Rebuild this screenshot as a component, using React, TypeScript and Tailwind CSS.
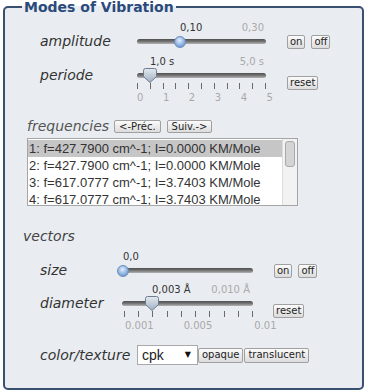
import React from 'react';

type SliderProps = {
  width: number;
  pos: number;
  value: string;
  max?: string;
  maxRight?: number;
  thumb: 'round' | 'pointer';
  ticks?: number;
  tickOffset?: number;
  tickLabels?: React.ReactNode;
};

const RoundThumb = ({ left }: { left: number }) => (
  <div
    className="absolute top-[1px] w-[12px] h-[12px] -ml-[6px] rounded-full border border-[#6a8cbb] bg-[radial-gradient(circle_at_45%_35%,#e3eefb,#8db2e2_55%,#5a84c0)]"
    style={{ left }}
  />
);

const PointerThumb = ({ left }: { left: number }) => (
  <svg className="absolute -top-[1px] -ml-[7px]" width="14" height="15" viewBox="0 0 14 15" style={{ left }}>
    <defs>
      <linearGradient id="pt" x1="0" y1="0" x2="0" y2="1">
        <stop offset="0" stopColor="#e4e9ef" />
        <stop offset="1" stopColor="#9fb0c3" />
      </linearGradient>
    </defs>
    <path d="M2.5 0.5 H11.5 Q13.5 0.5 13.5 2.5 V8.5 L7 14.5 L0.5 8.5 V2.5 Q0.5 0.5 2.5 0.5 Z" fill="url(#pt)" stroke="#6c7b8e" />
  </svg>
);

const Slider = ({ width, pos, value, max, maxRight = 2, thumb, ticks, tickOffset = 0, tickLabels }: SliderProps) => (
  <div className="relative shrink-0" style={{ width }}>
    <div className="relative h-[15px] text-[10px] leading-[12px]">
      <span className="absolute top-[2px] text-[#333]" style={{ left: pos }}>{value}</span>
      {max && (
        <span className="absolute top-[2px] text-[#a9a9a9]" style={{ right: maxRight }}>{max}</span>
      )}
    </div>
    <div className="relative h-[13px] flex items-center">
      <div className="w-full h-[5px] rounded-full bg-gradient-to-b from-[#4e4e4e] via-[#767676] to-[#b4b4b4]" />
      {thumb === 'round' ? <RoundThumb left={pos} /> : <PointerThumb left={pos} />}
    </div>
    {ticks && (
      <div className="flex justify-between h-[6px] mt-[1px]" style={{ marginLeft: tickOffset }}>
        {Array.from({ length: ticks }).map((_, i) => (
          <div key={i} className="w-px h-full bg-[#6a6a6a]" />
        ))}
      </div>
    )}
    {tickLabels}
  </div>
);

const Btn = ({ children, className = '' }: { children: React.ReactNode; className?: string }) => (
  <button
    className={`h-[14px] px-[2px] border border-[#a0a0a0] rounded-[2px] bg-gradient-to-b from-[#fbfbfb] to-[#dcdcdc] text-[10px] leading-[12px] text-[#222] ${className}`}
  >
    {children}
  </button>
);

const modes = [
  '1: f=427.7900 cm^-1; I=0.0000 KM/Mole',
  '2: f=427.7900 cm^-1; I=0.0000 KM/Mole',
  '3: f=617.0777 cm^-1; I=3.7403 KM/Mole',
  '4: f=617.0777 cm^-1; I=3.7403 KM/Mole',
];

export default function App() {
  return (
    <div className="w-[367px] h-[392px] bg-white font-['DejaVu_Sans',sans-serif] text-[#333]">
      <fieldset className="ml-[3px] w-[361px] h-[390px] border-2 border-[#3a5071] rounded-[5px] bg-[#e9edf1]">
        <legend className="ml-[17px] px-[2px] text-[14px] leading-[14px] font-bold text-[#2b4a7c]">
          Modes of Vibration
        </legend>

        {/* amplitude */}
        <div className="flex mt-[6px]">
          <div className="w-[132px] pl-[35px] mt-[15px] h-[13px] flex items-center italic text-[14px]">amplitude</div>
          <Slider width={129} pos={43} value="0,10" max="0,30" thumb="round" />
          <div className="flex gap-[6px] ml-[21px] mt-[15px]">
            <Btn>on</Btn>
            <Btn>off</Btn>
          </div>
        </div>

        {/* periode */}
        <div className="flex mt-[5px]">
          <div className="w-[132px] pl-[35px] mt-[15px] h-[13px] flex items-center italic text-[14px]">periode</div>
          <Slider
            width={129}
            pos={13}
            value="1,0 s"
            max="5,0 s"
            thumb="pointer"
            ticks={11}
            tickLabels={
              <div className="flex justify-between w-[136px] mt-[3px] text-[10px] leading-[12px] text-[#a9a9a9]">
                <span>0</span>
                <span>1</span>
                <span>2</span>
                <span>3</span>
                <span>4</span>
                <span>5</span>
              </div>
            }
          />
          <div className="ml-[21px] mt-[15px]">
            <Btn>reset</Btn>
          </div>
        </div>

        {/* frequencies */}
        <div className="flex items-center h-[15px] mt-[15px] pl-[22px]">
          <span className="italic text-[14px] text-[#555] leading-[15px]">frequencies</span>
          <Btn className="ml-[5px] !h-[13px] px-[4px] text-[9px] leading-[11px]">&lt;-Préc.</Btn>
          <Btn className="ml-[6px] !h-[13px] px-[4px] text-[9px] leading-[11px]">Suiv.-&gt;</Btn>
        </div>

        <div className="ml-[22px] mt-[4px] w-[271px] h-[68px] border border-[#a5a5a5] bg-white flex overflow-hidden">
          <div className="flex-1 pt-px font-['Liberation_Sans',Arial,sans-serif] text-[13px] leading-[17px] text-[#333]">
            {modes.map((m, i) => (
              <div key={i} className={`pl-[1px] whitespace-nowrap ${i === 0 ? 'bg-[#c6c6c6]' : ''}`}>
                {m}
              </div>
            ))}
          </div>
          <div className="w-[15px] border-l border-[#dcdcdc] bg-[#f2f2f2] pt-[2px] pl-[2px]">
            <div className="w-[10px] h-[26px] rounded-[3px] border border-[#a9a9a9] bg-[#d4d4d4]" />
          </div>
        </div>

        {/* vectors */}
        <div className="mt-[22px] pl-[18px] h-[17px] italic text-[14px] leading-[17px] text-[#444]">vectors</div>

        {/* size */}
        <div className="flex mt-[4px]">
          <div className="w-[117px] pl-[35px] mt-[15px] h-[13px] flex items-center italic text-[14px]">size</div>
          <Slider width={131} pos={1} value="0,0" thumb="round" />
          <div className="flex gap-[6px] ml-[21px] mt-[15px]">
            <Btn>on</Btn>
            <Btn>off</Btn>
          </div>
        </div>

        {/* diameter */}
        <div className="flex mt-[4px]">
          <div className="w-[117px] pl-[35px] mt-[15px] h-[13px] flex items-center italic text-[14px]">diameter</div>
          <Slider
            width={131}
            pos={30}
            value="0,003 Å"
            max="0,010 Å"
            maxRight={3}
            thumb="pointer"
            ticks={10}
            tickOffset={2}
            tickLabels={
              <div className="flex mt-[3px] text-[10px] leading-[12px] text-[#a9a9a9] whitespace-nowrap">
                <span className="ml-[3px]">0.001</span>
                <span className="ml-[30px]">0.005</span>
                <span className="ml-[42px]">0.01</span>
              </div>
            }
          />
          <div className="ml-[20px] mt-[15px]">
            <Btn>reset</Btn>
          </div>
        </div>

        {/* color/texture */}
        <div className="flex items-center mt-[13px] h-[20px]">
          <div className="w-[132px] pl-[35px] italic text-[14px]">color/texture</div>
          <div className="w-[61px] h-[20px] border border-[#a9a9a9] bg-white flex items-center justify-between pl-[4px] pr-[6px]">
            <span className="font-['Liberation_Sans',Arial,sans-serif] text-[14px] leading-[16px] text-[#222]">cpk</span>
            <span className="text-[8px] text-[#111]">▼</span>
          </div>
          <Btn className="!h-[15px] px-[3px]">opaque</Btn>
          <Btn className="ml-px !h-[15px] px-[3px]">translucent</Btn>
        </div>
      </fieldset>
    </div>
  );
}
